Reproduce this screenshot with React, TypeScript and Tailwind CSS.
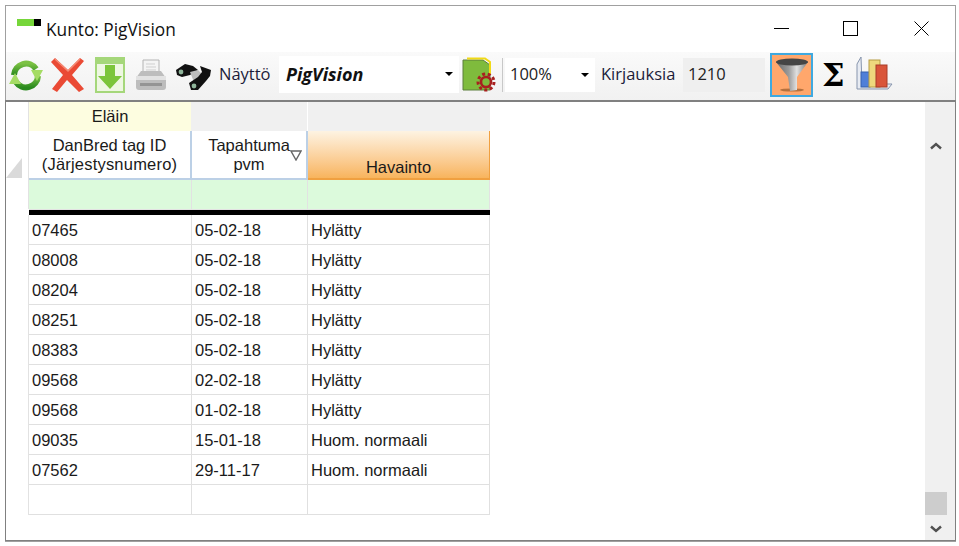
const rows = [
  ["07465", "05-02-18", "Hylätty"],
  ["08008", "05-02-18", "Hylätty"],
  ["08204", "05-02-18", "Hylätty"],
  ["08251", "05-02-18", "Hylätty"],
  ["08383", "05-02-18", "Hylätty"],
  ["09568", "02-02-18", "Hylätty"],
  ["09568", "01-02-18", "Hylätty"],
  ["09035", "15-01-18", "Huom. normaali"],
  ["07562", "29-11-17", "Huom. normaali"],
  ["", "", ""],
];

function RefreshIcon() {
  return (
    <svg width="34" height="34" viewBox="0 0 34 34" className="shrink-0">
      <defs>
        <linearGradient id="rf" x1="0" y1="0" x2="0" y2="1">
          <stop offset="0" stopColor="#7cc244" />
          <stop offset="1" stopColor="#2a8a1e" />
        </linearGradient>
      </defs>
      <path d="M5 17 A12 12 0 0 1 27 11" fill="none" stroke="url(#rf)" strokeWidth="6" />
      <path d="M29 18 A12 12 0 0 1 7 24" fill="none" stroke="url(#rf)" strokeWidth="6" />
      <path d="M22 12 L34 12 L28 23 Z" fill="#a5dc64" />
      <path d="M0 26 L12 26 L6 15 Z" fill="#a5dc64" />
    </svg>
  );
}

function DeleteIcon() {
  return (
    <svg width="34" height="36" viewBox="0 0 34 36" className="shrink-0">
      <path
        d="M4 1 L17 13 L29 1 L33 4 L21 18 L33 32 L28 35 L16 23 L6 35 L1 32 L12 18 L0 5 Z"
        fill="#ea4a35"
      />
      <path d="M4 2 L17 14 L29 2" fill="none" stroke="#f58a74" strokeWidth="1.5" />
    </svg>
  );
}

function DownloadIcon() {
  return (
    <svg width="30" height="36" viewBox="0 0 30 36" className="shrink-0">
      <rect x="1" y="1" width="28" height="34" fill="#eef7e2" stroke="#a5d77a" strokeWidth="2" />
      <rect x="2" y="2" width="26" height="5" fill="#a5d77a" />
      <path d="M10 8 H20 V19 H27 L15 32 L3 19 H10 Z" fill="#7cc53a" />
    </svg>
  );
}

function PrinterIcon() {
  return (
    <svg width="32" height="32" viewBox="0 0 32 32" className="shrink-0">
      <path d="M8 1 H24 V15 H8 Z" fill="#f4f4f4" stroke="#b4b4b4" />
      <path d="M11 5 H20 M11 8 H21 M11 11 H21" stroke="#cfcfcf" />
      <path d="M6 12 H26 L31 19 V28 Q31 31 28 31 H4 Q1 31 1 28 V19 Z" fill="#bdbdbd" />
      <rect x="1" y="17" width="30" height="4" fill="#e2e2e2" />
      <rect x="5" y="24" width="22" height="3" fill="#949494" />
    </svg>
  );
}

function BinocularsIcon() {
  return (
    <svg width="36" height="28" viewBox="0 0 36 28" className="shrink-0">
      <path d="M0 7 L9 1 L17 3 L22 7 L14 12 L6 14 L1 12 Z" fill="#111" />
      <path d="M14 9 L22 7 L27 12 L18 19 Z" fill="#bdbdbd" />
      <path d="M24 3 L35 7 L34 13 L30 18 L22 27 L15 27 L13 20 L22 14 L26 9 Z" fill="#111" />
      <circle cx="5" cy="9" r="2.4" fill="#8fb59a" />
      <circle cx="18" cy="23" r="2.4" fill="#8fb59a" />
    </svg>
  );
}

function ReportIcon() {
  return (
    <svg width="36" height="36" viewBox="0 0 36 36" className="shrink-0">
      <path d="M2 3 H22 L29 8 V33 H2 Z" fill="#7fbb3d" stroke="#5d7f3d" />
      <path d="M6 1.5 H24 L29 5 V18" fill="none" stroke="#f1da16" strokeWidth="2" />
      <circle cx="25" cy="25" r="8" fill="none" stroke="#a8201f" strokeWidth="3" strokeDasharray="3 2.6" />
      <circle cx="25" cy="25" r="5" fill="#7fbb3d" stroke="#a8201f" strokeWidth="2.6" />
    </svg>
  );
}

function FunnelIcon() {
  return (
    <svg width="32" height="36" viewBox="0 0 32 36" className="shrink-0">
      <defs>
        <linearGradient id="fn" x1="0" y1="0" x2="1" y2="0">
          <stop offset="0" stopColor="#666" />
          <stop offset="0.4" stopColor="#9c9c9c" />
          <stop offset="0.65" stopColor="#e0e0e0" />
          <stop offset="1" stopColor="#777" />
        </linearGradient>
      </defs>
      <ellipse cx="16" cy="33" rx="12" ry="1.6" fill="#b5713f" />
      <path d="M0 5 H32 L21 20 V33 L14 34 L12 20 Z" fill="url(#fn)" />
      <ellipse cx="16" cy="5" rx="16" ry="3.5" fill="#454545" />
    </svg>
  );
}

function ChartIcon() {
  return (
    <svg width="37" height="36" viewBox="0 0 37 36" className="shrink-0">
      <path d="M5 1 L1 8 V33 H32 L36 28 H6 Z" fill="#e7ebf2" stroke="#8795ad" />
      <rect x="5" y="16" width="9" height="15" fill="#4f7fd8" stroke="#3560ad" />
      <rect x="13" y="4" width="11" height="27" fill="#eed97d" stroke="#b59c45" />
      <rect x="20" y="9" width="11" height="22" fill="#d9553a" stroke="#a83d28" />
    </svg>
  );
}

function Caret() {
  return <span className="h-0 w-0 border-x-[4px] border-t-[4px] border-x-transparent border-t-black" />;
}

function Chevron({ up }: { up: boolean }) {
  return (
    <svg width="12" height="8" viewBox="0 0 12 8">
      <path
        d={up ? "M1 6.5 L6 2 L11 6.5" : "M1 1.5 L6 6 L11 1.5"}
        fill="none"
        stroke="#505050"
        strokeWidth="2.4"
      />
    </svg>
  );
}

export default function App() {
  return (
    <div className="h-[546px] w-[959px] overflow-hidden bg-white pl-[5px] pt-[5px] font-['Liberation_Sans',sans-serif] text-[16.5px] text-[#1a1a1a]">
      <div className="flex h-[537px] w-[951px] flex-col border border-[#a0a0a0] bg-white">
        {/* title bar */}
        <div className="relative flex h-[46px] shrink-0 items-center">
          <div className="absolute left-[11px] top-[13px] flex h-[7px]">
            <div className="w-[17px] bg-[#76d63a]" />
            <div className="w-[7px] bg-black" />
          </div>
          <span className="ml-[40px] mt-[1px] font-['Open_Sans',sans-serif] text-[17.3px] text-[#111]">
            Kunto: PigVision
          </span>
          <div className="mb-[2px] ml-auto flex items-center">
            <div className="mr-[54px] h-px w-[15px] bg-black" />
            <div className="mr-[56px] h-[15px] w-[15px] border border-black" />
            <svg width="15" height="15" viewBox="0 0 15 15" className="mr-[26px]">
              <path d="M0.5 0.5 L14.5 14.5 M14.5 0.5 L0.5 14.5" stroke="#000" />
            </svg>
          </div>
        </div>

        {/* toolbar */}
        <div className="flex h-[48px] shrink-0 items-center bg-gradient-to-b from-[#fafafa] to-[#f1f1f1] pb-[2px] font-['Open_Sans',sans-serif] text-[16.5px] text-[#1c1c3a]">
          <div className="ml-[3px]"><RefreshIcon /></div>
          <div className="ml-[8px] -mt-[1px]"><DeleteIcon /></div>
          <div className="ml-[10px]"><DownloadIcon /></div>
          <div className="ml-[10px]"><PrinterIcon /></div>
          <div className="ml-[9px] mt-[3px]"><BinocularsIcon /></div>
          <span className="ml-[7px] -mt-[1px] w-[53px]">Näyttö</span>
          <div className="ml-[7px] -mt-[2px] flex h-[37px] w-[180px] items-center bg-white pl-[7px] pr-[6px]">
            <span className="text-[18px] font-bold italic text-[#111]">PigVision</span>
            <span className="ml-auto flex"><Caret /></span>
          </div>
          <div className="ml-[2px]"><ReportIcon /></div>
          <div className="ml-[5px] h-[34px] w-px bg-[#c8c8c8]" />
          <div className="ml-[2px] flex h-[34px] w-[90px] items-center bg-white pb-[2px] pl-[5px] pr-[6px] text-[#222]">
            <span>100%</span>
            <span className="ml-auto mt-[2px] flex"><Caret /></span>
          </div>
          <span className="ml-[6px] -mt-[2px] w-[76px]">Kirjauksia</span>
          <div className="ml-[6px] flex h-[34px] w-[82px] items-center bg-[#efefef] pb-[2px] pl-[5px] text-[#222]">1210</div>
          <div className="ml-[5px] flex h-[44px] w-[43px] items-center justify-center border-2 border-[#3fa9e0] bg-[#ffa76c]">
            <FunnelIcon />
          </div>
          <span className="ml-[9px] w-[22px] text-center font-['DejaVu_Serif',serif] text-[32px] font-bold leading-none text-black">Σ</span>
          <div className="ml-[12px] -mt-[3px]"><ChartIcon /></div>
        </div>

        {/* grid */}
        <div className="-mx-px flex min-h-0 flex-1 border-x border-b border-t-2 border-[#808080]">
          <div className="flex min-w-0 flex-1 flex-col">
            <div className="flex h-[29px] shrink-0">
              <div className="w-[23px] border-r border-[#e2e2e2]" />
              <div className="flex w-[163px] items-center justify-center border-r border-[#f0f0f0] bg-[#fdfde0]">Eläin</div>
              <div className="w-[116px] border-r border-white bg-[#f0f0f0]" />
              <div className="w-[182px] bg-[#f0f0f0]" />
            </div>
            <div className="flex h-[49px] shrink-0 leading-[19px]">
              <div className="relative w-[23px] border-r border-[#e2e2e2]">
                <svg width="16" height="20" viewBox="0 0 16 20" className="absolute bottom-[2px] left-0">
                  <path d="M0 20 L16 0 V20 Z" fill="#dadada" />
                </svg>
              </div>
              <div className="flex w-[163px] flex-col items-center justify-center border-b-2 border-r-2 border-[#bcd0e6] text-center">
                <span>DanBred tag ID</span>
                <span className="tracking-[0.2px]">(Järjestysnumero)</span>
              </div>
              <div className="relative flex w-[116px] flex-col items-center justify-center border-b-2 border-r-2 border-[#bcd0e6] text-center">
                <span>Tapahtuma</span>
                <span>pvm</span>
                <svg width="12" height="11" viewBox="0 0 12 11" className="absolute left-[98px] top-[19px]">
                  <path d="M1 1 H11 L6 10 Z" fill="#fff" stroke="#666" strokeWidth="1.4" />
                </svg>
              </div>
              <div className="flex w-[182px] items-end justify-center border-b-2 border-r border-[#f0a040] bg-gradient-to-b from-[#fdf3e2] to-[#f8b45c] pb-[1px]">
                Havainto
              </div>
            </div>
            <div className="flex h-[29px] shrink-0">
              <div className="w-[23px] border-r border-[#e2e2e2]" />
              <div className="w-[163px] border-r border-[#e2e2e2] bg-[#dcfadc]" />
              <div className="w-[116px] border-r border-[#e2e2e2] bg-[#dcfadc]" />
              <div className="w-[182px] border-r border-[#e2e2e2] bg-[#dcfadc]" />
            </div>
            <div className="ml-[23px] h-px w-[461px] shrink-0 bg-[#e2e2e2]" />
            <div className="ml-[23px] h-[5px] w-[461px] shrink-0 bg-black" />
            {rows.map((row, i) => (
              <div key={i} className="flex h-[30px] shrink-0">
                <div className="w-[23px] border-r border-[#e2e2e2]" />
                <div className="flex w-[163px] items-center border-b-[1.5px] border-r-[1.5px] border-[#e0e0e0] pl-[3px] pt-[1px]">{row[0]}</div>
                <div className="flex w-[116px] items-center border-b-[1.5px] border-r-[1.5px] border-[#e0e0e0] pl-[3px] pt-[1px]">{row[1]}</div>
                <div className="flex w-[182px] items-center border-b-[1.5px] border-r-[1.5px] border-[#e0e0e0] pl-[3px] pt-[1px]">{row[2]}</div>
              </div>
            ))}
          </div>

          {/* scrollbar */}
          <div className="flex w-[30px] shrink-0 flex-col bg-[#f0f0f0] pb-[7px] pr-[8px] pt-[40px]">
            <div className="flex justify-center"><Chevron up /></div>
            <div className="mt-[342px] h-[25px] bg-[#cdcdcd]" />
            <div className="mt-[10px] flex justify-center"><Chevron up={false} /></div>
          </div>
        </div>
      </div>
    </div>
  );
}
